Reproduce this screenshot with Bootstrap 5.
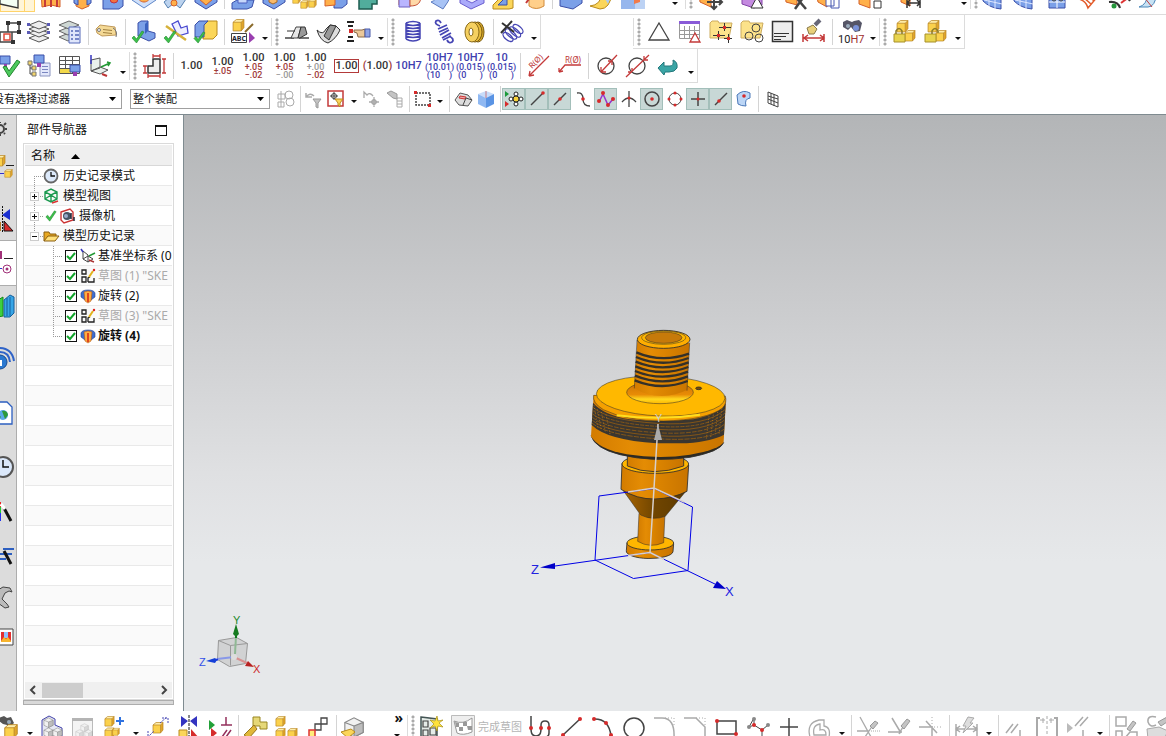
<!DOCTYPE html>
<html lang="zh-CN">
<head>
<meta charset="utf-8">
<meta name="viewport" content="width=device-width, initial-scale=1">
<title>部件导航器</title>
<link href="https://cdn.jsdelivr.net/npm/bootstrap@5.3.0/dist/css/bootstrap.min.css" rel="stylesheet">
<script src="https://cdn.jsdelivr.net/npm/bootstrap@5.3.0/dist/js/bootstrap.bundle.min.js"></script>
<style>
body{font:12px/20px "Noto Sans","Noto Sans CJK SC",sans-serif;color:#111;background:#fff}
button{border:0;background:none;padding:0;color:inherit}
svg{display:block;flex:none;overflow:visible}
.bar{height:34px;margin-left:-8px;flex:none}
.bar>*{flex:none}
.bar-cut{height:15px;margin-left:0;align-items:flex-end;padding-bottom:5px;border-bottom:1px solid #dcdcdc;overflow:hidden}
.bar-foot{height:25px;overflow:hidden}
.bar-foot>*{margin-top:4px}
.tgroup{display:flex;align-items:center;border-bottom:1px solid #dcdcdc;border-right:1px solid #dcdcdc;height:34px}
.tgroup-far{margin-left:92px}
.tool{width:31px;height:24px;display:flex;justify-content:center;align-items:center;flex:none}
.tool svg{width:24px;height:24px}
.drop{width:13px;height:24px;flex:none;display:flex;align-items:flex-end;justify-content:center;padding-bottom:4px}
.drop::after{content:"";border:3px solid transparent;border-top-color:#111;border-bottom:0}
.rule{width:6px;flex:none;height:26px;background:linear-gradient(#d4d4d4,#d4d4d4) 3px 0/1px 100% no-repeat}
.bar-foot .rule,.sel .rule{width:5px}
.grip{width:10px;flex:none;height:28px;background:radial-gradient(circle,#aaa 1px,transparent 2px) 3px 0/4px 4px repeat-y}
.lead-grip{border-left:1px solid #dcdcdc}
.bar-foot .grip{width:9px}
.k{stroke:#444;fill:none}.r{stroke:#c43a3a;fill:none}.g{stroke:#aaa;fill:none}.b{stroke:#4646b4;fill:none}
.red{fill:#d62b2b}.gray{fill:#c4c4c4;stroke:#999}.yel{fill:#fbd65a;stroke:#b98a1c}.blu{fill:#7ba0e8;stroke:#3b4fa8}.ora{fill:#ffb04a;stroke:#d4602a}
.dim{font:11px/10px Roboto,"Liberation Sans",sans-serif;flex-direction:column;color:#333;font-weight:500}
.dim small{font-size:9px;line-height:8px;display:block}
.dim .tr{color:#a03a3a}.dim .tg{color:#999}
.dim.blue{color:#4040b0}
.boxed{border:1px solid #b33a3a;padding:1px}
.pick{height:20px;width:140px;border:1px solid #a0a0a0;font-size:11px;line-height:18px;padding:0 2px;appearance:none;border-radius:0;color:#111;background:url("data:image/svg+xml,%3Csvg xmlns='http://www.w3.org/2000/svg' width='7' height='4'%3E%3Cpath d='M0 0h7l-3.500 4z'/%3E%3C/svg%3E") right 5px center no-repeat #fff}
.pick-cut{width:130px;margin-left:-8px;padding:0}
.sel{height:31px;flex:none}
.sel .tool{width:23px;height:22px}
.sel .tool svg{width:20px;height:20px}
.sel .drop{width:12px;padding-bottom:8px}
.sel .on{background:#c8d8d6;border:1px solid #a3bfba}
.rail{width:17px;background:#dcdcdc;border-right:1px solid #adadad;flex:none;display:flex;flex-direction:column;overflow:hidden}
.rail button{height:42px;display:flex;align-items:center;flex:none}
.rail .low{height:27px}
.rail .tall{height:54px}
.rail .mid{height:56px}
.rail .act{background:#fff;margin-right:-1px;border-top:1px solid #adadad;border-bottom:1px solid #adadad;height:46px}
.rail svg{width:16px;height:26px}
.side{width:166px;flex:none;padding:0 9px 6px 6px}
.work{border-top:1px solid #7f8b90;min-height:0}
.side-head{height:28px;padding:2px 7px 0 4px}
.max{width:12px;height:11px;border:1px solid #111;border-top-width:2px}
.tree{border:1px solid #dadada;padding:1px;min-height:0}
.tree-head{height:21px;line-height:22px;background:#efefef;border-bottom:1px solid #d8d8d8;padding-left:6px;flex:none}
.rows{overflow:hidden;min-height:0;background:repeating-linear-gradient(#fff 0 19px,#e9e9e9 19px 20px,#fafafa 20px 39px,#e9e9e9 39px 40px)}
.item{height:20px;display:flex;align-items:center;white-space:nowrap}
.item .name{margin-left:4px;line-height:20px}
.item label{margin-left:2px;line-height:20px}
.off{color:#aaa}
.twig{width:18px;height:20px;flex:none;background:repeating-linear-gradient(#999 0 1px,transparent 1px 2px) 9px 0/1px 100% no-repeat,repeating-linear-gradient(90deg,#999 0 1px,transparent 1px 2px) 9px 10px/9px 1px no-repeat;display:flex;align-items:center;padding-left:5px}
.twig.first{background-position:9px 10px,9px 10px}
.twig.last{background-size:1px 10px,9px 1px}
.twig button{width:9px;height:9px;background:#fff;border:1px solid #ccc;display:flex}
.deep{margin-left:19px;margin-right:2px}
.tickbox{appearance:none;width:12px;height:12px;border:1px solid #111;margin:0 3px 0 1px;flex:none;background:url("data:image/svg+xml,%3Csvg xmlns='http://www.w3.org/2000/svg' width='10' height='10'%3E%3Cpath d='M1 5l3 3 5-6' fill='none' stroke='%2312a52c' stroke-width='2'/%3E%3C/svg%3E") #fff}
.pan{height:16px;background:#f0f0f0;flex:none;padding:0 5px}
.thumb{width:41px;height:15px;background:#cdcdcd;margin-left:6px}
.band{height:5px;background:#d9d9d9;border:1px solid #adadad;flex:none}
.stage{border-left:1px solid #7f8b90;background:linear-gradient(#b3b5b7,#c9cacc 30%,#dfe0e2 60%,#e6e8ea 75%);min-width:0;overflow:hidden}
.stage svg{width:100%;height:100%}
.gold{border:1px solid #ffd36a;border-top:0;background:#fff5d8;width:35px;height:22px;margin-bottom:-3px;flex:none;display:flex}
.gold i{border-left:1px solid #ffd36a;margin-left:auto;width:10px}
.done{font-size:11px;width:47px;color:#b5b5b5;white-space:nowrap;line-height:24px;text-align:left}
.chev{width:38px;font-size:14px;line-height:12px;font-weight:700}
.bar-foot .chev{margin-top:1px}
.chev .drop{height:14px;padding-bottom:1px}
</style>
</head>
<body class="vh-100 d-flex flex-column overflow-hidden">
<svg width="0" height="0" class="position-absolute" aria-hidden="true"><defs>
<symbol id="cube" viewBox="0 0 12 12"><path fill="#ffeeaa" d="M1 3l3-2.500h7L8.500 3z"/><path fill="#fbd14c" d="M1 3h7.500v8H1z"/><path fill="#e0a52a" d="M8.500 3L11 .5v7.500L8.500 11z"/><path fill="none" stroke="#b98520" stroke-width=".7" d="M1 3l3-2.500h7v7.500L8.500 11H1zM1 3h7.500v8M8.500 3L11 .5"/></symbol>
<symbol id="gcube" viewBox="0 0 12 12"><path fill="#f1f1f1" stroke="#888" stroke-width=".6" d="M1 3.500L6 1l5 2.500V9l-5 2.500L1 9z"/><path fill="#bdbdbd" stroke="#888" stroke-width=".6" d="M6 5.500l5-2V9l-5 2.500z"/><path fill="none" stroke="#888" stroke-width=".6" d="M1 3.500l5 2"/></symbol>
<symbol id="tick" viewBox="0 0 14 14"><path fill="#3cc04a" stroke="#23862f" stroke-width=".6" d="M1 8l2-2 2.500 3L11 1l2 1-7.500 11z"/></symbol>
<symbol id="pipe" viewBox="0 0 16 16"><path fill="#3e6ed0" stroke="#28408c" stroke-width=".6" d="M1 5q1-3 7-3t7 3v4l-4 3V5H5v7L1 9z"/><path fill="#ffae42" stroke="#b3591a" stroke-width=".6" d="M4 4q4-2 8 0l-1 9-3 2-3-2z"/><path fill="#e04420" d="M7 5h2v9H7z"/></symbol>
<symbol id="sketch" viewBox="0 0 16 16"><path fill="none" stroke="#222" stroke-width="1.300" d="M2 2h4v4H2zM2 9h4v5H2zM8 14v-4l2-1M8 14h6v-4"/><path stroke="#e2b21a" stroke-width="2" d="M9 9l4-6"/><circle cx="14" cy="2" r="1.200" fill="#d22"/></symbol>
<linearGradient id="cyl"><stop stop-color="#d37c00"/><stop offset=".3" stop-color="#e48c04"/><stop offset=".6" stop-color="#d98200"/><stop offset="1" stop-color="#c87400"/></linearGradient>
<linearGradient id="cone"><stop stop-color="#a86400"/><stop offset=".5" stop-color="#704500"/><stop offset="1" stop-color="#5d3a00"/></linearGradient>
<linearGradient id="fil" x2="0" y2="1"><stop stop-color="#c97000"/><stop offset=".6" stop-color="#e88c06"/><stop offset=".8" stop-color="#ffd820"/><stop offset="1" stop-color="#ffb800"/></linearGradient>
</defs></svg>

<!-- feature toolbar -->
<div class="bar bar-cut d-flex" role="toolbar" aria-label="特征">
<div class="gold"><button aria-label="草图"><svg width="20" height="22"><path fill="#f4fff4" stroke="#333" stroke-width="1.300" d="M-1 5h18v13L-1 14z"/></svg></button><i></i></div>
<button class="tool" aria-label="拉伸"><svg><path class="ora" d="M2 5h19v17l-9-2-9 2z"/><path class="r" stroke-width="2" d="M6 10v12M18 10v12M12 10v12"/></svg></button>
<button class="tool" aria-label="旋转"><svg><path class="ora" d="M6 5h13v16l-7 3-6-3z"/><path class="blu" d="M4 5h4v15l-4-2zM17 5h4v13l-4 2z"/></svg></button>
<button class="tool" aria-label="孔"><svg><path class="blu" d="M2 14L6 8h16v13l-4 3H2z"/><circle cx="13" cy="14" r="4" fill="#f4713c" stroke="#b34"/></svg></button>
<button class="tool" aria-label="凸台"><svg><path fill="#cfe0fa" stroke="#5f86c8" d="M0 15L12 8l12 7-12 8z"/><path class="ora" d="M5 8h14c0 12-14 12-14 0z"/></svg></button>
<button class="tool" aria-label="曲面"><svg><path fill="#bcd3ef" stroke="#547fb0" d="M1 17L12 8l11 6-6 9-6-5-6 5z"/><circle cx="11" cy="18" r="3" class="ora"/></svg></button>
<button class="tool" aria-label="抽壳"><svg><path class="blu" d="M1 14l11-5 11 5v3l-11 7L1 17z"/><path class="ora" d="M5 14l7-4 7 4-7 6z"/></svg></button>
<span class="rule"></span>
<button class="tool" aria-label="腔体"><svg><path class="blu" d="M1 18l5-3h17l-2 7-5 2H1z"/><path fill="#c7d7fb" stroke="#4c5ec0" d="M7 10h9v8H7z"/></svg></button>
<button class="tool" aria-label="垫块"><svg><path class="blu" d="M1 15l11-5 11 4v3l-11 7L1 18z"/><path fill="#f9b96a" stroke="#a76a2a" d="M7 12h8v5l-4 2-4-2z"/></svg></button>
<button class="tool" aria-label="阵列"><svg><use href="#cube" x="-1" y="10" width="9" height="9"/><use href="#cube" x="7" y="15" width="9" height="9"/><use href="#cube" x="15" y="14" width="9" height="9"/></svg></button>
<button class="tool" aria-label="修剪"><svg><path class="blu" d="M10 10h13v9l-5 4h-8z"/><path class="ora" d="M1 12l10-2v10l-10 1z"/></svg></button>
<button class="tool me-2" aria-label="求和"><svg><path fill="#51ad9c" stroke="#1e5c50" stroke-width="1.500" d="M4 8h18v11h-5v5H4z"/></svg></button>
<span class="ps-1"></span>
<button class="tool" aria-label="倒圆"><svg><path class="ora" d="M1 6h12v14H1z"/><path fill="#b9b5ff" stroke="#6f60c0" d="M1 14h11v8H1z"/><path fill="#ffd9a8" stroke="#c6533a" d="M12 21V10h11c0 8-3 11-11 11z"/></svg></button>
<button class="tool" aria-label="面"><svg><path fill="#a8c3f5" stroke="#5c7bc0" d="M2 17q6-2 7-9h14q-4 10-9 16z"/></svg></button>
<button class="tool" aria-label="槽"><svg><path fill="#aaaafa" stroke="#6a5ed0" d="M0 15l12-6 12 5v4l-13 6L0 18z"/><path fill="#eef" stroke="#6a5ed0" d="M6 15l7-4 6 3-7 4z"/></svg></button>
<button class="tool" aria-label="筋板"><svg><path class="yel" d="M2 20L15 7h7v16l-4 1H2z"/><path class="blu" d="M7 20l9-9v9z"/></svg></button>
<button class="tool" aria-label="螺纹"><svg><path fill="#ffcf8a" stroke="#d18a3a" d="M7 8h15v13q-8 5-15 0z"/><path class="r" stroke-width="2" d="M-1 14h8l-2-3M4 18l3-4"/></svg></button>
<span class="rule"></span>
<button class="tool" aria-label="偏置"><svg><path class="blu" d="M1 13h13l9-4v9l-9 6-13-3z"/><path fill="#ffd6a6" d="M3 12h11l7-5H4z"/></svg></button>
<button class="tool" aria-label="缝合"><svg><path class="yel" d="M0 21q11-1 12-13h10q-2 16-12 16z"/><path fill="#a9c9f5" d="M12 8h10l-4 11z"/></svg></button>
<button class="tool me-3" aria-label="补片"><svg><path fill="#bcd2f4" d="M0 4h24v20H0z"/><path fill="#6f9ae5" d="M0 4h14v20H0z" opacity=".5"/><path fill="#f17a4a" d="M13 8h6v9l-6 2z"/></svg></button>
<button class="drop ms-1" aria-label="更多"></button><span class="grip lead-grip ms-1"></span>
<button class="tool me-2" aria-label="移动面"><svg><path class="ora" d="M0 8h12v14l-11-5z"/><path stroke="#444" stroke-width="2" fill="none" d="M15 10v14M8 17h15M12 21l3 3 3-3M20 14l3 3-3 3"/></svg></button>
<button class="tool ms-1 me-2" aria-label="替换面"><svg><path fill="#c48ae0" stroke="#8442a8" d="M0 12h20v8l-8 3-12-4z"/><path fill="#fff" stroke="#333" d="M9 23l6-11 6 11z"/></svg></button>
<button class="tool ms-1" aria-label="删除面"><svg><path class="ora" d="M0 8h12v12l-11-3z"/><path stroke="#444" stroke-width="2.500" d="M9 10l12 14M20 10L10 24"/></svg></button>
<button class="tool me-2" aria-label="复制面"><svg><path class="ora" d="M0 8h11v14l-9-5z"/><path fill="#fff" stroke="#4858b0" d="M10 10h8v11h-8zM15 14h8v9h-8z"/></svg></button>
<button class="tool ms-1 me-3" aria-label="成组面"><svg><path class="ora" d="M0 10h11v13l-11-4z"/><path fill="#fff" stroke="#333" d="M15 7h7v6h-7zM15 16h7v7h-7z"/></svg></button>
<button class="tool me-3" aria-label="线性尺寸"><svg><path class="ora" d="M-5 8H4v13l-9-4z"/><path stroke="#333" stroke-width="1.500" fill="none" d="M1 12v11M14 12v11M1 18h13M4 15l-3 3 3 3M11 15l3 3-3 3"/></svg></button>
<button class="drop ms-2" aria-label="更多"></button><span class="grip lead-grip"></span>
<button class="tool" aria-label="曲面一"><svg><path class="blu" d="M-1 10l18 4v10Q6 23-1 16z"/><path stroke="#dfe7ff" d="M5 10v11M11 10v14M0 15l18 4"/></svg></button>
<button class="tool" aria-label="曲面二"><svg><path class="blu" d="M-1 10l18 4v10Q6 23-1 16z"/><path stroke="#dfe7ff" d="M5 10v11M11 10v14M0 15l18 4"/></svg></button>
<button class="tool" aria-label="曲面三"><svg><path class="blu" d="M3 10h16v13H3z"/><path fill="none" stroke="#fff" d="M3 17h16M11 10v13"/><circle cx="8" cy="14" r="2" class="k"/><circle cx="15" cy="14" r="2" class="k"/></svg></button>
<button class="tool" aria-label="曲线网格"><svg><path fill="none" stroke="#e25b2a" stroke-width="1.500" d="M2 14q7 2 9 9l10-12M6 12l8 7M12 11l5 5"/></svg></button>
<button class="tool" aria-label="扫掠"><svg><path stroke="#333" stroke-width="2" fill="none" d="M1 17q9-1 11 6M10 10q8 0 12 6"/><circle cx="6" cy="21" r="2.500" fill="#25963b"/><path stroke="#d33" stroke-width="2" d="M13 18l8-6"/></svg></button>
<button class="tool" aria-label="桥接"><svg><path fill="#c7e2f4" stroke="#4a86b8" d="M0 22q8-2 9-14h9q-2 14-9 14z"/><path class="r" d="M5 12l8 10"/></svg></button>
</div>

<!-- drafting tools -->
<div class="bar d-flex" role="toolbar" aria-label="工具">
<div class="tgroup">
<button class="tool" aria-label="布置"><svg><path class="k" stroke-width="1.500" d="M12 3h11v9H12zM4 12h12v10H4z"/><path fill="#333" d="M10 1h4v4h-4zM21 1h4v4h-4zM21 10h4v4h-4zM15 20h4v4h-4z"/><path fill="#fff" stroke="#e04a3a" stroke-width="1.500" d="M8 14h6v6H8z"/></svg></button>
<button class="tool" aria-label="图层设置"><svg><g fill="#eee" stroke="#555"><path d="M2 18l10-4 10 4-10 4z"/><path d="M2 13l10-4 10 4-10 4z"/><path d="M2 9l10-4 10 4-10 4z"/><path d="M2 5l10-4 10 4-10 4z"/></g><path fill="#5b5bb5" d="M0 3h3v3H0zM20 3h3v3h-3zM0 11h3v3H0zM20 11h3v3h-3z"/></svg></button>
<button class="tool" aria-label="图层类别"><svg><g fill="#cfd8d4" stroke="#666"><path d="M1 17l10-4 8 4-9 4z"/><path d="M1 11l10-4 8 4-9 4z"/><path d="M1 5l10-4 10 4-10 4z"/></g><path fill="#dfe6fb" stroke="#5468b8" d="M11 7h11v16H11z"/><path stroke="#5468b8" stroke-width="1.500" d="M13 11h2M17 11h4M13 15h2M17 15h4M13 19h2M17 19h4"/></svg></button>
<span class="rule"></span>
<button class="tool" aria-label="标签"><svg><path fill="#f4d995" stroke="#c0995a" d="M1 9l4-4 15 2 1 8-14 1-5-3z"/><path stroke="#a08040" d="M8 9.500l9 1M8 12.500l9 1"/><path fill="none" stroke="#777" d="M18 8q5 3 3 9"/><circle cx="4" cy="10" r="1.500" fill="#fff" stroke="#777"/></svg></button>
<span class="rule"></span>
<button class="tool" aria-label="检查实体"><svg><path class="blu" d="M6 3l3-2h7v10l7 2v5l-6 3-11-5z"/><path fill="#3b62c0" d="M13 4l3-3v10l-3 3z"/><use href="#tick" x="-1" y="10" width="14" height="14"/></svg></button>
<button class="tool" aria-label="检查草图"><svg><path fill="#eef" stroke="#4a4ad0" stroke-width="1.300" d="M9 4l6-3 3 7 6-2 1 7-10 3-3-6z"/><path stroke="#d6b13a" stroke-width="2.500" d="M3 6l20 14"/><use href="#tick" x="0" y="10" width="14" height="14"/></svg></button>
<button class="tool" aria-label="检查装配"><svg><path class="yel" d="M9 5l4-4h10v14l-4 4h-10z"/><path class="blu" d="M1 5l4-4h9l-4 4v12H1z"/><use href="#tick" x="-1" y="11" width="13" height="13"/></svg></button>
<span class="rule"></span>
<button class="tool" aria-label="文本注释"><svg><use href="#cube" x="1" y="-1" width="13" height="13"/><path stroke="#8a6a2a" stroke-width="2" d="M14 12l8-8"/><path fill="#fff" stroke="#444" d="M.5 13.500h15v9H.5z"/><path fill="#9a3fb0" d="M18 12l6 6-6 5z"/><text x="1" y="21" font-size="7" font-weight="700" fill="#223">ABC</text></svg></button>
<button class="drop" aria-label="更多"></button><span class="grip lead-grip"></span>
<button class="tool" aria-label="成形一"><svg><path class="k" stroke-width="1.500" d="M0 18h9M14 18h10"/><path fill="#e6e6e6" stroke="#444" d="M11 7l-5 11h7l3-11z"/><path fill="#999" stroke="#333" d="M16 7h4l2 7-7 4h-2z"/><path stroke="#333" d="M2 11h8"/></svg></button>
<button class="tool" aria-label="成形二"><svg><path fill="#ddd" stroke="#333" d="M1 10q6 6 9-1l4-4 6 1 4 4q-4 9-12 13Q4 21 1 10z"/><path fill="#999" stroke="#333" d="M14 5l-6 11 5 4 7-14z"/></svg></button>
<button class="tool" aria-label="手动选择"><svg><path stroke="#222" stroke-width="2" d="M0 2h7M1 6h5M1 17h5M0 21h7"/><path class="red" d="M2 9h4v4H2z"/><path fill="#ecc99a" stroke="#8a6a4a" d="M7 10h8l3-1v8h-7l-1-4-3-1z"/><path fill="#8fa4e6" stroke="#4a5aa8" d="M18 9h5v8h-5z"/></svg></button>
<button class="drop" aria-label="更多"></button><span class="grip lead-grip"></span>
<button class="tool" aria-label="压缩弹簧"><svg><path class="b" stroke-width="1.500" d="M5 4q7 3 14 0M5 7q7 3 14 0M5 10q7 3 14 0M5 13q7 3 14 0M5 16q7 3 14 0M5 19q7 4 14 0M5 3v16M19 3v16M5 3q7-3 14 0"/></svg></button>
<button class="tool" aria-label="拉伸弹簧"><svg><path class="b" stroke-width="1.800" d="M8 6Q2 4 4 1q3-2 5 2M6 9l9-4M7 12l9-4M8 15l9-5M10 18l9-5M11 20l8-4M17 16q6 3 3 6-3 2-5-2"/></svg></button>
<button class="tool" aria-label="滚轮"><svg><ellipse cx="15" cy="12" rx="6" ry="10" fill="#d7aa2a" stroke="#7a5a10"/><ellipse cx="12" cy="12" rx="7" ry="10" fill="#e9bd3c" stroke="#7a5a10"/><ellipse cx="9" cy="12" rx="7" ry="10" fill="#f5d060" stroke="#8a6a18"/><ellipse cx="8" cy="12" rx="2" ry="4" fill="#fff" stroke="#8a6a18"/></svg></button>
<span class="rule"></span>
<button class="tool" aria-label="删除弹簧"><svg><g class="b" stroke-width="1.300"><ellipse cx="8" cy="17" rx="3" ry="6" transform="rotate(-50 8 17)"/><ellipse cx="11" cy="14" rx="3" ry="7" transform="rotate(-50 11 14)"/><ellipse cx="15" cy="12" rx="3" ry="7" transform="rotate(-50 15 12)"/><ellipse cx="18" cy="9" rx="3" ry="6" transform="rotate(-50 18 9)"/></g><path stroke="#333" stroke-width="2" d="M2 3l12 9M12 1L1 13"/></svg></button>
<button class="drop" aria-label="更多"></button>
</div>
<div class="tgroup tgroup-far">
<span class="grip lead-grip"></span>
<button class="tool" aria-label="三角"><svg><path class="k" stroke-width="1.300" d="M12 3l10 17H2z"/></svg></button>
<button class="tool" aria-label="表格"><svg><path fill="#fff" stroke="#999" d="M1.500 2.500h20v16h-20zM1 10.500h20M1 14.500h20M6.500 6v12M11.500 6v12M16.500 6v12"/><path fill="#8a5bd8" d="M1 1h21v3H1z"/><path fill="#fff" stroke="#c43a3a" stroke-width="1.300" d="M17 13l5 9H12z"/></svg></button>
<button class="tool" aria-label="基准点夹"><svg><path class="yel" d="M1 3l2-2h6l1 2h13l-3 15H1z" opacity=".7"/><path stroke="#333" d="M10 7.500h12M15.500 3v8M4 15.500h12M9.500 11v9M15 18.500h8M19.500 14v9"/><path class="red" d="M14 6h3v3h-3zM8 14h3v3H8zM18 17h3v3h-3z"/></svg></button>
<button class="tool" aria-label="圆夹"><svg><path class="yel" d="M1 3l2-2h6l1 2h13l-3 15H1z" opacity=".7"/><g class="k"><circle cx="16" cy="8" r="4"/><circle cx="9" cy="16" r="4"/><circle cx="19" cy="18" r="4"/></g></svg></button>
<button class="tool" aria-label="注释框"><svg><path fill="#eee" stroke="#333" stroke-width="1.500" d="M1.500 1.500h20v20h-20z"/><path stroke="#333" d="M3 13.500h15M3 16.500h12M3 19.500h7"/></svg></button>
<button class="tool" aria-label="尺寸刷"><svg><path fill="#e8cf7a" stroke="#8a7a4a" d="M5 8l6-3 4 4-3 5H7z"/><path stroke="#667" stroke-width="4" d="M13 5l5-5"/><path class="r" stroke-width="1.500" d="M1 14v8M22 14v8M2 18h20M6 15l-4 3 4 3M18 15l4 3-4 3"/></svg></button>
<span class="rule"></span>
<button class="tool" aria-label="查找配合"><svg><path fill="#556" d="M4 2l4-2 5 2 2-1 5-1 3 3-2 8-5 1-4-5-3 3-5-3z"/><circle cx="17" cy="8" r="3" fill="#7a92d8"/><circle cx="9" cy="6" r="2" fill="#9ab"/><text x="-1" y="23" font-size="11" font-family="Roboto" fill="#222">10<tspan fill="#a03030">H7</tspan></text></svg></button>
<button class="drop" aria-label="更多"></button><span class="grip lead-grip"></span>
<button class="tool" aria-label="锁定"><svg><use href="#cube" x="3" y="0" width="13" height="13"/><use href="#cube" x="11" y="10" width="12" height="12"/><path fill="#e8d44e" stroke="#a8902a" d="M1 14h11v8H1z"/><path fill="none" stroke="#8a7a28" stroke-width="1.500" d="M3 14v-3q3-5 6 0v3"/></svg></button>
<button class="tool" aria-label="解锁"><svg><use href="#cube" x="3" y="0" width="13" height="13"/><use href="#cube" x="11" y="10" width="12" height="12"/><path fill="#e8d44e" stroke="#a8902a" d="M1 14h11v8H1z"/><path fill="none" stroke="#8a7a28" stroke-width="1.500" d="M8 14v-3q3-5 6 0v2"/></svg></button>
<button class="drop" aria-label="更多"></button>
</div>
</div>

<!-- dimension tools -->
<div class="bar d-flex" role="toolbar" aria-label="尺寸">
<div class="tgroup">
<button class="tool" aria-label="确认"><svg><path class="blu" d="M4 2h10v8H4z"/><path fill="#9a3fb0" d="M8 10h3v5H8z"/><path fill="#4cc95c" stroke="#23862f" d="M7 13l3-1 3 5 8-11 3 2-11 15z"/></svg></button>
<button class="tool" aria-label="结构树"><svg><path fill="#e3e8fb" stroke="#8a94c0" d="M13 9h10v13H13z"/><path stroke="#7a86c0" d="M15 12.500h6M15 15.500h6M15 18.500h6"/><path class="blu" d="M7 1h10v8H7z"/><path fill="#9a3fb0" d="M10 9h4v4h-4z"/><path fill="#f2d46a" stroke="#777" d="M1 7h4v4H1zM5 12h4v4H5zM5 18h4v4H5z"/><path class="k" d="M3 11v9h2M3 14h2"/></svg></button>
<button class="tool" aria-label="参数表"><svg><path fill="#fff" stroke="#555" d="M1.500 2.500h20v17h-20zM1 6.500h20M1 10.500h20M1 14.500h20M7.500 2v17M14.500 2v17"/><path fill="#f2d84a" d="M2 15h11v4H2z"/><path class="blu" d="M12 11h10v7H12z"/><path fill="#9a3fb0" d="M15 18h4v4h-4z"/></svg></button>
<button class="tool" aria-label="坐标系"><svg><path fill="#eaf0ec" stroke="#555" d="M2 6v11l9-3V4zM2 17l9-4 8 3-8 4z"/><path stroke="#33b" stroke-width="1.500" d="M2 10V1"/><path fill="none" stroke="#293" stroke-width="1.500" d="M12 13l9-4M18 8l3 1-2 3"/><path stroke="#b33" stroke-width="2" d="M13 20l5 2"/></svg></button>
<button class="drop" aria-label="更多"></button><span class="grip lead-grip"></span>
<button class="tool" aria-label="快速尺寸"><svg><path fill="#eee" stroke="#333" stroke-width="1.500" d="M5 19v-7h5V5h7v14z"/><path class="r" stroke-width="1.300" d="M2 12v7M0 12h4M0 19h4M5 22h12M5 20v4M17 20v4M21 5v14M19 5h4M19 19h4M10 2h7M10 0v4M17 0v4"/></svg></button>
<span class="rule"></span>
<button class="tool dim">1.00</button>
<button class="tool dim">1.00<small class="tr">±.05</small></button>
<button class="tool dim">1.00<small class="tr">+.05</small><small class="tr">−.02</small></button>
<button class="tool dim">1.00<small class="tr">+.05</small><small class="tg">−.00</small></button>
<button class="tool dim">1.00<small class="tg">+.00</small><small class="tr">−.02</small></button>
<button class="tool dim"><span class="boxed">1.00</span></button>
<button class="tool dim"><span><span class="tr">(</span>1.00<span class="tr">)</span></span></button>
<button class="tool dim blue">10H7</button>
<button class="tool dim blue">10H7<small>(10.01)</small><small>(10&nbsp; &nbsp; )</small></button>
<button class="tool dim blue">10H7<small>(0.015)</small><small>(0&nbsp; &nbsp; &nbsp; )</small></button>
<button class="tool dim blue">10<small>(0.015)</small><small>(0&nbsp; &nbsp; &nbsp; )</small></button>
<span class="rule"></span>
<button class="tool" aria-label="半径标注"><svg><path class="r" stroke-width="1.300" d="M2 22L22 2M2 22l1-5M2 22l5-1"/><text font-size="8" fill="#b33" transform="translate(5 15) rotate(-45)">R(Ø)</text></svg></button>
<button class="tool" aria-label="折线半径"><svg><path class="r" stroke-width="1.300" d="M1 18l6-7h16M1 18v-4M1 18l4-1"/><text x="7" y="9" font-size="8" fill="#b33">R(Ø)</text></svg></button>
<span class="rule"></span>
<button class="tool" aria-label="直径内"><svg><circle cx="11" cy="12" r="8" class="k" stroke-width="1.300"/><path class="r" stroke-width="1.300" d="M6 18L22 1M6 18v-5M6 18h5M17 7v4M17 7h-4"/></svg></button>
<button class="tool" aria-label="直径外"><svg><circle cx="11" cy="12" r="8" class="k" stroke-width="1.300"/><path class="r" stroke-width="1.300" d="M0 23L23 1M6 18v-4M6 18H2M18 6v-4M18 6h4"/></svg></button>
<button class="tool" aria-label="返回"><svg><path fill="#3aa5a5" stroke="#24787c" d="M1 14l6-6v4h6q4 0 3-6 5 2 4 8-2 4-8 4H8l-1 3z"/></svg></button>
<button class="drop" aria-label="更多"></button>
</div>
</div>

<!-- selection bar -->
<div class="sel d-flex align-items-center" role="toolbar" aria-label="选择">
<select class="pick pick-cut" aria-label="选择过滤器"><option>没有选择过滤器</option></select>
<select class="pick ms-2" aria-label="选择范围"><option>整个装配</option></select>
<span class="ps-1"></span>
<button class="tool" aria-label="类选择"><svg><path class="g" d="M2 5h7v5H2zM5 2v16M2 13h6v5H2z"/><circle cx="13" cy="6" r="4" class="g"/><circle cx="14" cy="13" r="4" class="g"/></svg></button>
<span class="rule"></span>
<button class="tool" aria-label="重置过滤"><svg><path class="g" stroke-width="1.500" d="M8 8H2V4M2 8q4-5 8-1"/><path class="gray" d="M9 10h8l-3 4v5l-2-1v-4z"/></svg></button>
<button class="tool" aria-label="过滤"><svg><path fill="#fff" stroke="#c43a3a" stroke-width="1.500" d="M1 2h15v15H1z"/><circle cx="7" cy="7" r="2.500" class="k"/><path class="k" d="M7 3v8M3 7h8"/><path class="yel" d="M8 10h8l-3 4v4l-2-2v-2z"/></svg></button>
<button class="drop" aria-label="更多"></button>
<button class="tool" aria-label="取消选择"><svg><path class="g" stroke-width="1.300" d="M2 9V3l3 3q3-3 6 1M12 8v10M7 13h10M9 13l3-3 3 3-3 3z"/></svg></button>
<button class="tool" aria-label="查找"><svg><path class="gray" d="M2 4l4-2 6 3v5L8 9z"/><path class="g" d="M12 9h5v9h-5zM12 12h5M12 15h5"/></svg></button>
<span class="rule"></span>
<button class="tool" aria-label="矩形选择"><svg><path class="k" stroke-width="1.500" stroke-dasharray="2 1" d="M3 4h14v12H3z"/><path class="red" d="M1 2h3v3H1zM15 15h3v3h-3z"/></svg></button>
<button class="drop" aria-label="更多"></button><span class="rule"></span>
<button class="tool" aria-label="着色"><svg><path fill="#ddd" stroke="#555" d="M2 11l5-7 8 2 4 5-4 6-9-1z"/><path fill="#eaa" stroke="#c33" d="M7 7l6 1-1 2-6-1z"/><path class="k" d="M10 16l3-7 6 2"/></svg></button>
<button class="tool" aria-label="实体"><svg><path fill="#c8dcfa" d="M2 5l8-3 8 3-8 4z"/><path fill="#8fb8f2" d="M2 5l8 4v10l-8-4z"/><path fill="#5a94e4" d="M10 9l8-4v10l-8 4z"/><path class="r" d="M10 2v7" opacity=".6"/></svg></button>
<span class="rule"></span>
<button class="tool on" aria-label="启用捕捉"><svg><path fill="#1a9a3a" d="M1 2l4 3-4 3z"/><path class="red" d="M1 12l4 3-4 3z"/><g fill="#fff" stroke="#222"><circle cx="12" cy="5" r="2"/><circle cx="7" cy="10" r="2"/><circle cx="17" cy="10" r="2"/><circle cx="12" cy="15" r="2"/></g><circle cx="12" cy="10" r="3" fill="#f6d23a" stroke="#222"/></svg></button>
<button class="tool on" aria-label="端点"><svg><path class="k" stroke-width="1.500" d="M4 16L16 4"/><circle cx="16" cy="4" r="1.800" class="red"/></svg></button>
<button class="tool on" aria-label="中点"><svg><path class="k" stroke-width="1.500" d="M4 16L16 4"/><circle cx="10" cy="10" r="1.800" class="red"/></svg></button>
<button class="tool" aria-label="控制点"><svg><path class="k" stroke-width="1.300" d="M4 4q6-1 6 6t7 7"/><circle cx="10" cy="10" r="1.800" class="red"/></svg></button>
<button class="tool on" aria-label="极点"><svg><path fill="none" stroke="#93c" stroke-width="1.500" d="M3 13l4-8 5 11 5-6"/><g class="red"><circle cx="3" cy="12" r="2"/><circle cx="7" cy="4" r="2"/><circle cx="12" cy="16" r="2"/><circle cx="17" cy="10" r="2"/></g></svg></button>
<button class="tool" aria-label="交点"><svg><path class="k" stroke-width="1.300" d="M10 2v16M3 13q7-8 14 0"/><circle cx="10" cy="9" r="1.500" class="red"/></svg></button>
<button class="tool on" aria-label="圆心"><svg><circle cx="10" cy="10" r="7" class="k" stroke-width="1.500"/><circle cx="10" cy="10" r="1.800" class="red"/></svg></button>
<button class="tool" aria-label="象限点"><svg><circle cx="10" cy="10" r="6" class="k"/><g class="red"><circle cx="10" cy="4" r="1.500"/><circle cx="10" cy="16" r="1.500"/><circle cx="4" cy="10" r="1.500"/><circle cx="16" cy="10" r="1.500"/></g></svg></button>
<button class="tool on" aria-label="现有点"><svg><path class="k" stroke-width="1.500" d="M10 3v14M3 10h14"/><circle cx="10" cy="10" r="1.500" class="red"/></svg></button>
<button class="tool on" aria-label="曲线上的点"><svg><path class="k" stroke-width="1.500" d="M4 16L16 4"/><circle cx="8" cy="12" r="1.800" class="red"/></svg></button>
<button class="tool" aria-label="面上的点"><svg><path fill="#bcd6f6" stroke="#4a78b8" d="M3 6q6-6 13-2v5q-6 1-4 8-5 0-8-2z"/><circle cx="10" cy="7" r="1.800" class="red"/></svg></button>
<span class="rule"></span>
<button class="tool" aria-label="栅格"><svg><path class="k" d="M6 3l10 4v11L6 14zM6 7l10 3M6 10l10 4M9 4v11M12 5v12"/></svg></button>
</div>

<div class="work d-flex flex-grow-1">
<nav class="rail" aria-label="资源条">
<button class="low" aria-label="设置"><svg><circle cx="0" cy="13" r="4" class="k" stroke-width="2"/><path stroke="#444" stroke-width="2" d="M0 7v-1M4 9l2-2M5 13h2M4 17l1 1M0 18v2"/></svg></button>
<button class="mid" aria-label="装配导航器"><svg><use href="#cube" x="-6" y="-2" width="12" height="12"/><use href="#cube" x="4" y="12" width="9" height="9"/><path stroke="#222" d="M6 8.500h8"/><path stroke="#33c" d="M0 16.500h4"/></svg></button>
<button aria-label="约束导航器"><svg><path fill="#1a2fd0" d="M10 3v11L2 9z"/><path stroke="#111" stroke-dasharray="2 1" d="M2.500 0v26"/><path class="red" stroke="#111" d="M4 15v10h9z"/><path fill="#b57a2a" d="M-2 16h3v9h-3z"/></svg></button>
<button class="act" aria-label="部件导航器"><svg><path fill="#a03078" d="M-2 1h4v8h-4z"/><path stroke="#222" d="M4 8.500h9"/><path stroke="#33c" d="M-1 18.500h3"/><circle cx="7" cy="19" r="4" fill="#fff" stroke="#a03078"/><circle cx="7" cy="19" r="1.500" fill="#a03078"/></svg></button>
<button aria-label="重用库"><svg><path fill="#3ed03e" stroke="#178a17" d="M-2 6l5-3v19l-5 1z"/><path fill="#37a5e6" stroke="#155f9c" d="M4 6l6-5 4 2v16l-4 4H4z"/><path stroke="#155f9c" d="M7 4v18M10 3v19"/></svg></button>
<button class="tall mt-1" aria-label="高清三维"><svg><circle cx="0" cy="16" r="7" fill="#2a78d0" stroke="#174a90"/><path stroke="#2f63c8" stroke-width="2" fill="none" d="M0 6q9 0 10 10M-1 2q13 0 15 13"/><path stroke="#fff" stroke-width="2" d="M1 14v6"/></svg></button>
<button class="tall" aria-label="浏览器"><svg><path fill="#fff" stroke="#2d5fc0" stroke-width="1.300" d="M-2 2h9l5 5v17h-14z"/><circle cx="3" cy="15" r="5" fill="#5aa8e8"/><path fill="#2d9a3a" d="M2 11q5-1 6 4l-3 4zM-2 13l3 4-2 2z"/></svg></button>
<button class="tall" aria-label="历史记录"><svg><circle cx="3" cy="13" r="10" fill="#dbe8fa" stroke="#555" stroke-width="2"/><path stroke="#111" stroke-width="1.500" fill="none" d="M3 6v7h6"/></svg></button>
<button aria-label="材料"><svg><path fill="#e22" d="M-2 0h3v5h-3z"/><path fill="#2c3" d="M-2 5h3v6h-3z"/><path fill="#23e" d="M-2 11h3v8h-3z"/><path stroke="#111" stroke-width="3" d="M4 6l7 13"/><path stroke="#fff" stroke-width="3" d="M1 2l4 5"/></svg></button>
<button aria-label="工艺"><svg><path stroke="#2d5fc0" stroke-width="2" d="M3 5h11M0 10h12M-1 15h7"/><path stroke="#111" stroke-width="3" d="M4 7l7 13"/></svg></button>
<button aria-label="机床"><svg><path fill="#bbb" stroke="#444" d="M-2 4l5-3 7 1 2 4-3-1-4 2-3 6 5 5 2 3-4 1-7-5z"/></svg></button>
<button aria-label="系统"><svg><path fill="#fff" stroke="#444" d="M-2 1h15v16h-15z"/><path fill="#e33030" d="M1 4h10v10H1z"/><path fill="#8fc2ff" d="M4 4h4v6H4z"/><path fill="#f7b52e" d="M1 13l3-4 2 2 2-2 3 4v1H1z"/></svg></button>
</nav>

<aside class="side d-flex flex-column">
<div class="side-head d-flex align-items-center justify-content-between"><span>部件导航器</span><button class="max" aria-label="最大化"></button></div>
<div class="tree d-flex flex-column flex-grow-1">
<div class="tree-head">名称<svg width="9" height="5" class="d-inline-block ms-3"><path d="M0 5l4.500-5L9 5z"/></svg></div>
<div class="rows flex-grow-1">
<div class="item"><span class="twig first"></span><svg width="16" height="16"><circle cx="8" cy="8" r="6.500" fill="#dce9fa" stroke="#666" stroke-width="1.800"/><path fill="none" stroke="#111" stroke-width="1.300" d="M8 4v4h4"/></svg><span class="name">历史记录模式</span></div>
<div class="item"><span class="twig"><button aria-label="展开"><svg width="7" height="7"><path stroke="#111" d="M1 3.500h5M3.500 1v5"/></svg></button></span><svg width="16" height="16"><path fill="none" stroke="#1c9a50" stroke-width="1.400" d="M2 4l6-3 6 3v7l-6 3-6-3zM2 4l6 3 6-3M8 7v7M2 11l6-4 6 4"/><path stroke="#d33" stroke-width="1.500" d="M9 15l6-2"/></svg><span class="name">模型视图</span></div>
<div class="item"><span class="twig"><button aria-label="展开"><svg width="7" height="7"><path stroke="#111" d="M1 3.500h5M3.500 1v5"/></svg></button></span><svg width="16" height="14"><use href="#tick" x="2" y="1" width="12" height="12"/></svg><svg width="16" height="16"><path fill="#fff" stroke="#c33" stroke-width="1.400" d="M2 4l9-3 3 3v8l-9 3-3-3z"/><circle cx="8" cy="8" r="4" fill="#456"/><circle cx="7" cy="8" r="2" fill="#9ac"/><path stroke="#223" stroke-width="1.500" d="M12 5v6M15 9v4"/></svg><span class="name">摄像机</span></div>
<div class="item"><span class="twig last"><button aria-label="折叠"><svg width="7" height="7"><path stroke="#111" d="M1 3.500h5"/></svg></button></span><svg width="16" height="16"><path fill="#e8a820" stroke="#8a5e10" d="M1 13V4h5l1 2h6v3"/><path fill="#ffe07a" stroke="#8a5e10" d="M1 13l4-5h11l-4 5z"/></svg><span class="name">模型历史记录</span></div>
<div class="item"><span class="twig deep"></span><input class="tickbox" type="checkbox" id="f0" checked><svg width="16" height="16"><path fill="none" stroke="#444" d="M3 3v8l5 3V7zM3 11l5-3 5 3-5 3"/><path stroke="#33b" stroke-width="1.500" d="M1 1l2 3"/><path stroke="#293" stroke-width="1.500" d="M9 8l6-3"/><path stroke="#a33" stroke-width="1.500" d="M9 12l5 2"/></svg><label for="f0">基准坐标系 (0</label></div>
<div class="item"><span class="twig deep"></span><input class="tickbox" type="checkbox" id="f1" checked><svg width="16" height="16"><use href="#sketch"/></svg><label for="f1" class="off">草图 (1) "SKE</label></div>
<div class="item"><span class="twig deep"></span><input class="tickbox" type="checkbox" id="f2" checked><svg width="16" height="16"><use href="#pipe" width="16" height="16"/></svg><label for="f2">旋转 (2)</label></div>
<div class="item"><span class="twig deep"></span><input class="tickbox" type="checkbox" id="f3" checked><svg width="16" height="16"><use href="#sketch"/></svg><label for="f3" class="off">草图 (3) "SKE</label></div>
<div class="item"><span class="twig deep last"></span><input class="tickbox" type="checkbox" id="f4" checked><svg width="16" height="16"><use href="#pipe" width="16" height="16"/></svg><label for="f4" class="fw-bold">旋转 (4)</label></div>
</div>
<div class="pan d-flex align-items-center"><button aria-label="向左滚动"><svg width="6" height="8"><path fill="none" stroke="#444" stroke-width="2" d="M5 0L1 4l4 4"/></svg></button><span class="thumb"></span><button class="ms-auto" aria-label="向右滚动"><svg width="6" height="8"><path fill="none" stroke="#444" stroke-width="2" d="M1 0l4 4-4 4"/></svg></button></div>
</div>
<div class="band"></div>
</aside>

<main class="stage flex-grow-1">
<svg viewBox="184 115 982 596" role="img" aria-label="模型">
<g transform="translate(520 320) scale(.33333)" stroke="#2b2b2b" stroke-width="2.500">
<path fill="url(#cyl)" d="M321 668L319 692A70 22 0 0 0 459 695L461 671"/><ellipse cx="391" cy="669" rx="70" ry="21" fill="#ffb600"/>
<path fill="url(#cyl)" stroke-width="1.500" d="M357 580L353 664Q390 686 431 668L435 580"/>
<path fill="url(#cone)" stroke-width="1.500" d="M310 512L362 585Q398 603 436 589L499 512Z"/>
<path fill="url(#cyl)" d="M306 430L303 508Q350 538 405 537Q460 535 501 514L506 435Z"/>
<ellipse cx="406" cy="432" rx="100" ry="28" fill="#ffb600"/>
<path fill="url(#cyl)" d="M322 405V438Q400 472 491 438V405Z"/>
<path fill="#2e2a22" d="M213 347Q225 385 300 404Q400 428 510 412Q600 395 611 368Z"/>
<path fill="url(#cyl)" stroke="none" d="M221 225L213 349Q235 388 320 403Q420 418 510 404Q600 388 611 366L618 235Z"/>
<path fill="#3a3630" stroke="none" d="M219 248Q250 285 330 298Q430 308 520 298Q595 285 617 250L612 344Q580 362 500 370H410Q260 360 215 315Z"/>
<g fill="none" stroke="#a8650c" stroke-width="2"><path d="M219 262Q260 300 410 310T616 268"/><path stroke-dasharray="12 3" d="M219 272Q260 309 410 319T616 278"/><path d="M218 282Q260 318 410 328T615 289"/><path stroke-dasharray="14 4" d="M217 292Q260 328 410 338T614 299"/><path d="M217 301Q260 337 410 347T613 313"/><path stroke-dasharray="16 3" d="M216 309Q260 346 410 356T613 327"/></g>
<g stroke="#d28412" stroke-dasharray="3 5" stroke-width="2" fill="none"><path d="M222 256l12 70M232 268l12 62M244 276l12 60M258 284l12 58M605 266l-8 78M593 276l-8 72M580 284l-8 68M567 289l-8 68"/></g>
<path fill="#f5a000" stroke-width="1.500" d="M221 226Q216 248 250 269Q320 303 430 303Q560 300 608 264Q622 248 616 228Z"/>
<ellipse cx="422" cy="228" rx="193" ry="60" fill="#ffb800" transform="rotate(2 422 228)" stroke-width="1.500"/>
<path fill="none" stroke="#ffdf20" stroke-width="6" d="M290 286Q420 302 540 284"/>
<ellipse cx="420" cy="217" rx="100" ry="34" fill="url(#fil)" stroke-width="1.500"/>
<path fill="url(#cyl)" stroke="none" d="M352 60L343 205Q380 228 425 228Q470 226 501 210L509 68Z"/>
<path fill="none" stroke="#333029" stroke-width="7" d="M349 97Q425 130 507 101M348 111Q425 144 506 114M347 125Q425 158 506 127M346 139Q425 172 505 141M345 153Q425 186 504 155M345 167Q425 200 504 169M344 181Q425 214 503 183"/>
<path fill="none" d="M351 60L343 205M509 68L501 212" stroke-width="1.500"/>
<ellipse cx="431" cy="58" rx="79" ry="27" fill="#ffae00"/><ellipse cx="431" cy="53" rx="66" ry="20" fill="#ffb800" stroke-width="1.500"/><ellipse cx="431" cy="53" rx="55" ry="17" fill="#c67a0a" stroke-width="1.500"/>
<ellipse cx="536" cy="205" rx="9" ry="4" fill="#7a4c00"/>
</g>
<g fill="none" stroke="#0000e6"><path d="M654.300 488.500L599 496L595 560L633.500 578.500L688 570.500L692.500 507Z"/><path d="M650 552.500L548 567M650 552.500L718 585.500"/></g>
<g fill="none" stroke="#d8d0cc" stroke-width="1.500"><path d="M628 492l26-4 30 14M658 424l-8 128.500M650 552.500l-22 3M650 552.500l14 7"/></g>
<path fill="#aaa" d="M658 424l4 16h-8z"/>
<path fill="#0000c8" d="M540 567.500L555 563V569z"/><path fill="#0000c8" d="M726 589L717 581L713 588z"/>
<g font-size="13" font-family="Liberation Sans" fill="#2222e0"><text x="531" y="574">Z</text><text x="725" y="596">X</text><text x="655" y="422" font-size="11" fill="#ccc">Y</text></g>
<g stroke="#999" fill="#bbb" fill-opacity=".5"><path d="M218.500 640.500l18-3 11 6-2 20-16 3-12-7z"/><path fill="none" d="M218.500 640.500l12 5 17-2M230.500 645.500v20"/></g>
<g stroke-width="2"><path stroke="#8fb894" d="M235 654l1-18"/><path stroke="#0b7a1c" d="M236 638v-8"/><path stroke="#8898e8" d="M234 657l-17 2"/><path stroke="#2038d8" d="M218 659.500l-6 1"/><path stroke="#d89090" d="M236 658l11 5"/><circle cx="234" cy="657" r="3" fill="#ddd" stroke="none"/></g>
<path fill="#157a20" d="M236 624l3 10-3 3-3-3z"/><path fill="#1540d8" d="M206 661l9-3 2 2-2 3z"/><path fill="#b82222" d="M254 667l-9-1 3-5z"/>
<g font-size="11" font-family="Liberation Sans"><text x="233" y="624" fill="#238a2c">Y</text><text x="199" y="666" fill="#3350e8">Z</text><text x="253" y="673" fill="#cc2a2a">X</text></g>
</svg>
</main>
</div>

<!-- assembly and sketch toolbar -->
<div class="bar bar-foot d-flex" role="toolbar" aria-label="装配与草图">
<button class="tool" aria-label="查找组件"><svg><path fill="#555" d="M3 3l5-2 3 2 4-1 3 6-3 3-8-2-4-3z"/><circle cx="13" cy="7" r="2" fill="#9ab"/><use href="#cube" x="6" y="9" width="18" height="15"/></svg></button><button class="drop" aria-label="更多"></button>
<button class="tool" aria-label="显示组件"><svg><path fill="#e6e8f4" stroke="#44a" d="M2 5l7-4 6 3v6l7 3v11H2z"/><use href="#gcube" x="3" y="2" width="11" height="11"/><use href="#gcube" x="3" y="12" width="11" height="11"/><use href="#gcube" x="12" y="12" width="11" height="11"/></svg></button>
<button class="tool" aria-label="窗口"><svg><path fill="#f4f4f4" stroke="#bbb" d="M1.500 3.500h20v21h-20z"/><path fill="#b4b4b4" d="M1 3h21v3H1z"/><g opacity=".5"><use href="#gcube" x="9" y="8" width="9" height="9"/><use href="#gcube" x="4" y="14" width="9" height="9"/><use href="#gcube" x="13" y="14" width="9" height="9"/></g></svg></button>
<button class="tool" aria-label="添加组件"><svg><use href="#cube" x="2" y="1" width="11" height="11"/><use href="#cube" x="2" y="12" width="11" height="12"/><use href="#cube" x="10" y="12" width="8" height="10"/><path stroke="#2f72e0" stroke-width="2" d="M14 6h8M18 2v8"/></svg></button><button class="drop" aria-label="更多"></button>
<button class="tool" aria-label="移动组件"><svg><use href="#cube" x="6" y="7" width="12" height="12"/><path class="b" stroke-dasharray="2 1" d="M16 3h6v6M2 16v6h6M14 8l7-6M2 22l6-6"/></svg></button>
<button class="tool" aria-label="镜像装配"><svg><path fill="#3434c0" d="M4 1l7 5-7 6zM20 1l-7 5 7 6z"/><path stroke="#111" stroke-dasharray="3 1" d="M12 0v24"/><path class="yel" d="M2 15h8v9H2z"/><path class="red" d="M14 14v10h9z"/></svg></button>
<button class="tool" aria-label="装配约束"><svg><path fill="#22a038" d="M1 5l6 5-6 5z"/><path class="red" d="M3 13l6 5-6 5z"/><path stroke="#94305c" fill="none" stroke-width="1.500" d="M18 2v8M13 10h11M14 22l5-7M18 22l5-7"/></svg></button>
<span class="rule"></span>
<button class="tool" aria-label="抑制"><svg><path fill="#e6d878" stroke="#998620" d="M9 2h7v5h7v7h-7v-3h-7z"/><path fill="#e0b83a" stroke="#997620" d="M10 10l3 4-8 9-5-3z"/></svg></button>
<button class="tool" aria-label="爆炸图"><svg><use href="#cube" x="0" y="1" width="11" height="11"/><use href="#cube" x="0" y="13" width="11" height="11"/><use href="#cube" x="12" y="13" width="11" height="11"/></svg></button>
<button class="tool" aria-label="序列"><svg><path class="k" stroke-width="1.300" d="M15 3h6v6h-6zM9 9h6v6H9z"/><path fill="#ffed7a" stroke="#d33" stroke-width="1.500" d="M3 15h6v7H3z"/></svg></button>
<span class="rule"></span>
<button class="tool" aria-label="间隙分析"><svg><use href="#gcube" x="1" y="1" width="22" height="22"/><path class="yel" d="M-1 17l10-3 4 3-7 6z"/></svg></button>
<span class="chev d-flex flex-column align-items-end pe-1"><span>»</span><button class="drop" aria-label="更多"></button></span>
<span class="grip lead-grip"></span>
<button class="tool" aria-label="直接草图"><svg><path fill="#e5ece8" stroke="#455" stroke-width="1.500" d="M1 2l16 2v20L1 22z"/><path class="k" stroke-width="1.200" d="M3 6h5v6H3zM10 13h6v7h-6zM3 15h5v6H3z"/><path fill="#ffe23a" stroke="#a8901a" stroke-width=".7" d="M17 1l1 5 5-1-4 3 4 4-5-1-1 5-2-5-5 2 4-4-4-4 5 1z"/></svg></button>
<button class="tool" aria-label="完成" disabled><svg><path fill="#eee" stroke="#bbb" d="M.5.500h23v24H.5z"/><path fill="#fff" stroke="#999" d="M3 6q9 4 18-3v14q-9 4-15 1z"/><path fill="#999" d="M4 7l4 1v4H5zM12 7h4v4h-4zM8 12h4v4H8zM16 11h5v4h-4z"/></svg></button>
<button class="done" disabled>完成草图</button>
<button class="tool" aria-label="轮廓"><svg><path class="k" stroke-width="1.500" d="M2 1v13q0 7 5 7t5-7v-4q0-4 4-4t4 4v8q0 4-4 4"/><circle cx="2" cy="13" r="2" class="red"/><circle cx="12" cy="13" r="2" class="red"/><circle cx="20" cy="13" r="2" class="red"/></svg></button>
<button class="tool" aria-label="直线"><svg><path class="k" stroke-width="1.500" d="M3 20L20 4"/><circle cx="20" cy="4" r="2" class="red"/><circle cx="3" cy="20" r="2" class="red"/></svg></button>
<button class="tool" aria-label="圆弧"><svg><path class="k" stroke-width="1.500" d="M2 4q16-1 18 17"/><circle cx="3" cy="4" r="2" class="red"/><circle cx="15" cy="8" r="2" class="red"/><circle cx="20" cy="20" r="2" class="red"/></svg></button>
<button class="tool" aria-label="圆"><svg><circle cx="12" cy="13" r="10" class="k" stroke-width="1.500"/></svg></button>
<button class="tool" aria-label="圆角"><svg><path class="g" stroke-width="1.500" d="M1 3h8q13 0 12 20"/><path class="g" stroke-dasharray="1 2" d="M12 3h9v9"/></svg></button>
<button class="tool" aria-label="倒斜角"><svg><path class="g" stroke-width="1.500" d="M0 3h12l9 9v12"/><path class="g" stroke-dasharray="1 2" d="M12 3h9v9"/></svg></button>
<button class="tool" aria-label="矩形"><svg><path class="k" stroke-width="1.500" d="M2 6h19v13H2z"/><circle cx="2" cy="6" r="2" class="red"/><circle cx="21" cy="19" r="2" class="red"/></svg></button>
<button class="tool" aria-label="样条"><svg><path class="k" d="M3 12l5-9v7l8 5 6-5M3 12l5-2M16 15v8"/><circle cx="3" cy="12" r="2" fill="#888"/><circle cx="8" cy="4" r="2" fill="#888"/><circle cx="22" cy="10" r="2" fill="#888"/><circle cx="8" cy="10" r="2" class="red"/><circle cx="16" cy="15" r="2" class="red"/></svg></button>
<button class="tool" aria-label="点"><svg><path class="k" stroke-width="1.500" d="M12 3v18M3 12h18"/></svg></button>
<button class="tool" aria-label="偏置曲线"><svg><path class="g" stroke-width="1.300" d="M2 22q-4-14 9-17h5v6q7 1 5 11zM6 20q-2-10 6-11v6q6-2 6 5z"/></svg></button><button class="drop" aria-label="更多"></button>
<span class="rule"></span>
<button class="tool" aria-label="快速修剪"><svg><path class="g" stroke-width="1.300" d="M3 2l11 20M0 16h12M16 10L8 22"/><path class="g" stroke-dasharray="1 1" d="M14 16h9"/><path class="gray" d="M13 11l5-5 3 2-5 6z"/></svg></button>
<button class="tool" aria-label="快速延伸"><svg><path class="g" stroke-width="1.500" d="M0 17h14M4 3l9 15M16 10l-5 9"/><path class="gray" d="M13 11l6-7 3 2-6 8z"/></svg></button>
<button class="tool" aria-label="制作拐角"><svg><path class="g" stroke-width="1.500" d="M0 12h13v11M7 6l11 12"/><path class="g" stroke-dasharray="1 2" d="M13 2v10h10"/></svg></button>
<span class="rule"></span>
<button class="tool" aria-label="快速尺寸"><svg><path class="g" stroke-width="1.500" d="M1 9v12M22 9v12M1 14h21M5 11l-4 3 4 3M18 11l4 3-4 3"/><path fill="#ddd" stroke="#aaa" d="M13 2l6 1-4 5h3L8 18l3-7H8z"/></svg></button><button class="drop" aria-label="更多"></button>
<span class="rule"></span>
<button class="tool" aria-label="几何约束"><svg><path class="g" stroke-width="1.500" d="M2 18l7-9M7 18l7-9M16 15v9M12 23h10"/></svg></button>
<button class="tool" aria-label="对称"><svg><path class="g" stroke-width="2" d="M5 3H2v21M19 3h3v21"/><path class="g" stroke-dasharray="3 2" d="M12 1v24"/><path class="g" d="M5 5h5M19 5h-5M8 3v5M16 3v5"/></svg></button>
<button class="tool" aria-label="显示约束"><svg><path fill="#bbb" d="M1 8l6 5-6 5z"/><path class="g" stroke-width="1.500" d="M9 11l8-9M14 11l8-9M17 15v8M12 22h10"/></svg></button><button class="drop" aria-label="更多"></button>
<span class="rule"></span>
<button class="tool" aria-label="转换参考"><svg><path class="g" stroke-width="1.500" d="M1 2h10v9H1zM1 16h6v7H1zM10 23l5-6h7v7"/><path class="gray" d="M12 14l6-8 3 2-6 8z"/></svg></button>
<button class="tool" aria-label="备选解"><svg><path class="g" stroke-width="1.500" d="M10 2q-9-2-8 5 2 6 8 3"/><path class="gray" d="M12 7l9-5 3 3-9 6z"/><path fill="#ddd" stroke="#aaa" d="M1 14l12-2 9 4-4 8H2z"/></svg></button>
</div>
</body>
</html>
